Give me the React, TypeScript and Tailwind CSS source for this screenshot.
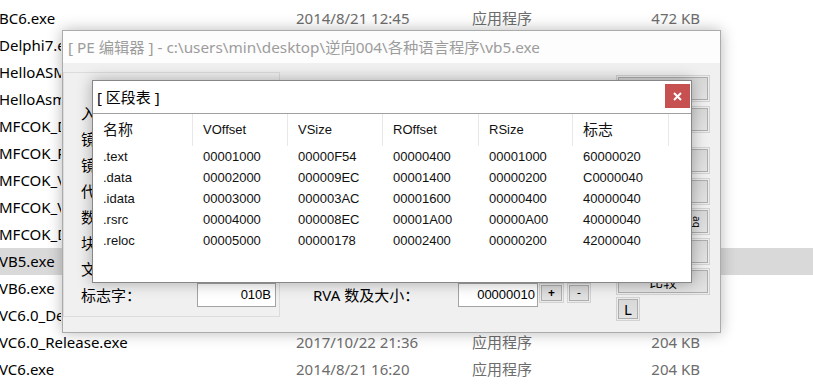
import React from "react";

const rows = [
  { n: "BC6.exe", d: "2014/8/21 12:45", s: "472 KB" },
  { n: "Delphi7.exe", hidden: true },
  { n: "HelloASM.exe", hidden: true },
  { n: "HelloAsm2.exe", hidden: true },
  { n: "MFCOK_Debug.exe", hidden: true },
  { n: "MFCOK_Release.exe", hidden: true },
  { n: "MFCOK_VS2008.exe", hidden: true },
  { n: "MFCOK_VS2010.exe", hidden: true },
  { n: "MFCOK_Debug2.exe", hidden: true },
  { n: "VB5.exe", hidden: true, sel: true },
  { n: "VB6.exe", hidden: true },
  { n: "VC6.0_Debug.exe", hidden: true },
  { n: "VC6.0_Release.exe", d: "2017/10/22 21:36", s: "204 KB" },
  { n: "VC6.exe", d: "2014/8/21 16:20", s: "204 KB" },
];

const sections = [
  [".text", "00001000", "00000F54", "00000400", "00001000", "60000020"],
  [".data", "00002000", "000009EC", "00001400", "00000200", "C0000040"],
  [".idata", "00003000", "000003AC", "00001600", "00000400", "40000040"],
  [".rsrc", "00004000", "000008EC", "00001A00", "00000A00", "40000040"],
  [".reloc", "00005000", "00000178", "00002400", "00000200", "42000040"],
];

const colW = ["w-[100px]", "w-[95px]", "w-[95px]", "w-[96px]", "w-[94px]", "w-[96px]"];
const heads = ["名称", "VOffset", "VSize", "ROffset", "RSize", "标志"];

function Btn({ mt, children, w = "w-[94px]", h = "h-[27px]" }: { mt: string; children?: React.ReactNode; w?: string; h?: string }) {
  return (
    <div className={`${mt} ${w} ${h} border border-[#d2d2d2] bg-[#ececec] p-[1px]`}>
      <div className="h-full w-full border border-[#adadad] bg-[linear-gradient(#d8d8d8,#e2e2e2)] flex items-center justify-center text-[14px] text-black">
        {children}
      </div>
    </div>
  );
}

export default function App() {
  return (
    <div
      className="relative w-[813px] h-[386px] overflow-hidden bg-white"
      style={{ fontFamily: '"Noto Sans", "Noto Sans CJK SC", sans-serif' }}
    >
      {/* Explorer list */}
      <div className="pt-[5px] flex flex-col">
        {rows.map((r, i) => (
          <div
            key={i}
            className={`h-[27px] flex items-center text-[15px] ${r.sel ? "bg-[#d9d9d9]" : ""}`}
          >
            {r.hidden ? (
              <div className="w-[62px] overflow-hidden whitespace-nowrap text-black ml-[-1px]">{r.n}</div>
            ) : (
              <>
                <div className="w-[297px] text-black ml-[-1px]">{r.n}</div>
                <div className="w-[176px] text-[#6d6d6d]">{r.d}</div>
                <div className="w-[150px] text-[#6d6d6d]">应用程序</div>
                <div className="w-[78px] text-right text-[#6d6d6d]">{r.s}</div>
              </>
            )}
          </div>
        ))}
      </div>

      {/* PE editor window */}
      <div className="absolute left-[62px] top-[30px] w-[659px] h-[303px] border border-[#ababab] bg-[#f0f0f0] shadow-[0_0_14px_rgba(0,0,0,0.28)] flex flex-col">
        <div className="h-[32px] bg-[#fdfdfd] flex items-center pl-[5px] text-[15.3px] text-[#9c9c9c] whitespace-nowrap">
          [ PE 编辑器 ] - c:\users\min\desktop\逆向004\各种语言程序\vb5.exe
        </div>
        <div className="flex-1 flex">
          {/* group box */}
          <div className="mt-[9px] w-[217px] h-[245px] border border-[#dcdcdc] pt-[27px] pl-[17px] flex flex-col text-[15px] text-black">
            {["入", "镜", "镜", "代", "数", "块", "文"].map((t, i) => (
              <div key={i} className="h-[26px] flex items-center">{t}</div>
            ))}
            <div className="h-[26px] flex items-center">
              <span>标志字：</span>
              <div
                className="ml-auto mr-[3px] w-[79px] h-[24px] bg-white border border-[#a3a3a3] flex items-center justify-end pr-[4px] text-[13px]"
                style={{ fontFamily: '"Liberation Sans", sans-serif' }}
              >
                010B
              </div>
            </div>
          </div>
          {/* middle */}
          <div className="w-[336px] pt-[220px] pl-[33px]">
            <div className="h-[24px] flex items-start">
              <div className="w-[145px] h-[24px] flex items-center text-[15px] text-black">RVA 数及大小：</div>
              <div
                className="w-[80px] h-[24px] bg-white border border-[#a3a3a3] flex items-center justify-end pr-[2px] text-[13px]"
                style={{ fontFamily: '"Liberation Sans", sans-serif' }}
              >
                00000010
              </div>
              <Btn mt="mt-0 ml-[1px]" w="w-[25px]" h="h-[20px]">
                <span className="text-[12px] font-bold">+</span>
              </Btn>
              <Btn mt="mt-0 ml-[3px]" w="w-[24px]" h="h-[20px]">
                <span className="text-[12px]">-</span>
              </Btn>
            </div>
          </div>
          {/* right buttons */}
          <div className="w-[94px] flex flex-col">
            <Btn mt="mt-[12px]" />
            <Btn mt="mt-[4px]" />
            <Btn mt="mt-[14px]" />
            <Btn mt="mt-[4px]" />
            <div className="mt-[3px] w-[94px] h-[27px] border border-[#d2d2d2] bg-[#ececec] p-[1px]">
              <div className="h-full w-full border border-[#adadad] bg-[linear-gradient(#d8d8d8,#e2e2e2)] flex items-center justify-end pr-[4px]">
                <span className="rotate-90 text-[10px] leading-none text-black">ag</span>
              </div>
            </div>
            <Btn mt="mt-[3px]" />
            <Btn mt="mt-[3px]">比较</Btn>
            <Btn mt="mt-[2px]" w="w-[24px]" h="h-[24px]">
              <span className="text-[15px]">L</span>
            </Btn>
          </div>
        </div>
      </div>

      {/* Section table dialog */}
      <div className="absolute left-[92px] top-[80px] w-[600px] h-[203px] border border-[#878787] bg-white shadow-[0_0_14px_rgba(0,0,0,0.3)] flex flex-col">
        <div className="h-[33px] flex items-start justify-between border-b border-[#a0a0a0]">
          <div className="h-[32px] flex items-center pl-[4px] text-[15px] text-black">[ 区段表 ]</div>
          <div className="mt-[3px] mr-[1px] w-[25px] h-[24px] bg-[#c75050] flex items-center justify-center">
            <svg width="9" height="9" viewBox="0 0 9 9">
              <path d="M1 1 L8 8 M8 1 L1 8" stroke="white" strokeWidth="2" />
            </svg>
          </div>
        </div>
        <div
          className="flex flex-col text-[13px] text-[#111]"
          style={{ fontFamily: '"Liberation Sans", "Noto Sans CJK SC", sans-serif' }}
        >
          <div className="h-[32px] flex">
            {heads.map((h, i) => (
              <div
                key={i}
                className={`${colW[i]} h-full flex items-center pl-[10px] border-r border-[#e8e8e8] ${i === 0 || i === 5 ? "text-[15px]" : "text-[13px]"}`}
              >
                {h}
              </div>
            ))}
          </div>
          {sections.map((r, i) => (
            <div key={i} className="h-[21px] flex items-center">
              {r.map((c, j) => (
                <div key={j} className={`${colW[j]} pl-[10px]`}>
                  {c}
                </div>
              ))}
            </div>
          ))}
        </div>
      </div>
    </div>
  );
}
